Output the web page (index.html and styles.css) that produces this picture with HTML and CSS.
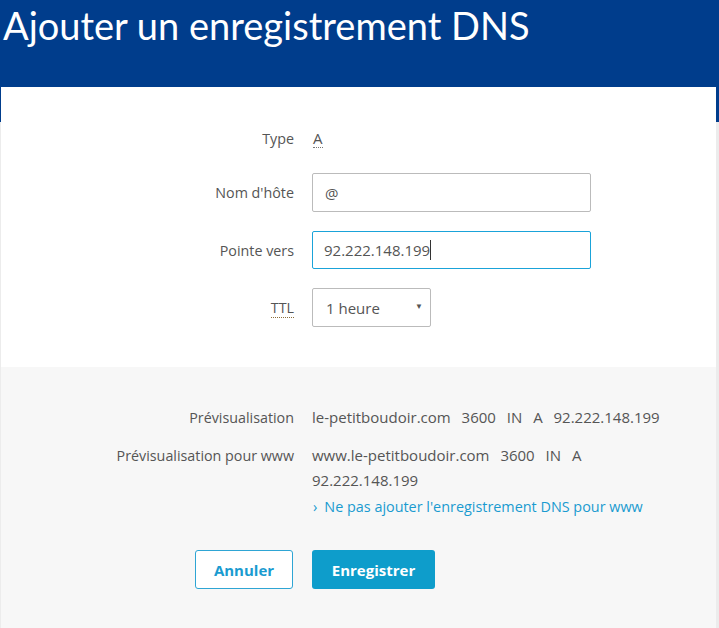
FILE: index.html
```html
<!DOCTYPE html>
<html lang="fr">
  <head>
    <meta charset="UTF-8" />
    <meta name="viewport" content="width=device-width, initial-scale=1.0" />
    <title>Ajouter un enregistrement DNS</title>
    <link rel="stylesheet" href="styles.css">
  </head>
  <body>
    <header class="page-header">
      <h1>Ajouter un enregistrement DNS</h1>
    </header>

    <div class="panel">
      <form class="record-form">
        <label class="field-label">Type</label>
        <div class="field-value type-row">
          <abbr class="type-value" title="Adresse IPv4">A</abbr>
        </div>

        <label class="field-label" for="hostname">Nom d'hôte</label>
        <div class="field-value">
          <input id="hostname" class="text-input" type="text" value="@" />
        </div>

        <label class="field-label">Pointe vers</label>
        <div class="field-value">
          <div class="text-input focused">92.222.148.199<span class="caret"></span></div>
        </div>

        <label class="field-label" for="ttl"><abbr class="ttl-label" title="Time To Live">TTL</abbr></label>
        <div class="field-value">
          <div class="select-wrap">
            <select id="ttl" class="select-input">
              <option>1 heure</option>
              <option>4 heures</option>
              <option>1 jour</option>
            </select>
          </div>
        </div>
      </form>

      <div class="preview">
        <div class="preview-grid">
          <span class="field-label">Prévisualisation</span>
          <div class="preview-value">le-petitboudoir.com 3600 IN A 92.222.148.199</div>

          <span class="field-label">Prévisualisation pour www</span>
          <div class="preview-value">
            <div>www.le-petitboudoir.com 3600 IN A 92.222.148.199</div>
            <a href="#" class="www-link"><span class="chevron">›</span>Ne pas ajouter l'enregistrement DNS pour www</a>
          </div>

          <span></span>
          <div class="actions">
            <button type="button" class="btn btn-outline">Annuler</button>
            <button type="button" class="btn btn-primary">Enregistrer</button>
          </div>
        </div>
      </div>
    </div>
  </body>
</html>
```

FILE: styles.css
```css
body {
  margin: 0;
  padding: 0;
  font-family: "Open Sans", "Noto Sans", sans-serif;
  background-color: #ececec;
  color: #555;
}

.page-header {
  background-color: #003d8c;
  height: 122px;
  padding: 0 3px;
  box-sizing: border-box;
}

.page-header h1 {
  margin: 0;
  padding-top: 1px;
  color: #fff;
  font-family: Lato, "Open Sans", sans-serif;
  font-size: 38px;
  font-weight: 400;
  line-height: 48px;
}

.panel {
  background-color: #fff;
  margin: -35px 3px 0 1px;
}

.record-form {
  display: grid;
  grid-template-columns: 293px 279px;
  column-gap: 18px;
  row-gap: 19px;
  align-items: center;
  padding: 35px 0 40px;
}

.field-label {
  text-align: right;
  font-size: 14.3px;
  color: #555;
}

.field-value {
  display: flex;
  align-items: center;
  min-height: 38px;
}

.field-value.type-row {
  min-height: 32px;
}

.type-value {
  text-decoration: none;
  font-size: 15px;
  border-bottom: 1px dotted #777;
  line-height: 18px;
  margin-left: 1px;
}

.ttl-label {
  text-decoration: none;
  border-bottom: 1px dotted #8a6d3b;
}

.text-input {
  box-sizing: border-box;
  width: 279px;
  height: 39px;
  padding: 0 12px;
  border: 1px solid #bbb;
  border-radius: 2px;
  font-family: inherit;
  font-size: 15px;
  color: #555;
  display: flex;
  align-items: center;
  outline: none;
}

.text-input.focused {
  border-color: #1aa3d9;
  height: 38px;
  padding-left: 11px;
}

.caret {
  display: inline-block;
  width: 1px;
  height: 20px;
  background-color: #333;
}

.select-wrap {
  position: relative;
  width: 119px;
}

.select-wrap::after {
  content: "▼";
  position: absolute;
  right: 8px;
  top: 12px;
  font-size: 8px;
  color: #555;
  pointer-events: none;
}

.select-input {
  appearance: none;
  -webkit-appearance: none;
  box-sizing: border-box;
  width: 119px;
  height: 39px;
  padding: 0 13px;
  border: 1px solid #bbb;
  border-radius: 2px;
  background-color: #fff;
  font-family: inherit;
  font-size: 15px;
  color: #555;
}

.preview {
  background-color: #f7f7f7;
  padding: 38px 0 40px;
}

.preview-grid {
  display: grid;
  grid-template-columns: 293px 360px;
  column-gap: 18px;
  row-gap: 13px;
  line-height: 25px;
}

.preview-value {
  font-size: 15px;
  word-spacing: 7px;
  color: #555;
}

.www-link {
  display: block;
  margin-top: 1px;
  font-size: 14.4px;
  word-spacing: 0;
  color: #1a9bd0;
  text-decoration: none;
}

.chevron {
  margin: 0 7px 0 1px;
}

.actions {
  display: flex;
  gap: 19px;
  margin-left: -117px;
  margin-top: 18px;
}

.btn {
  height: 39px;
  border-radius: 3px;
  font-family: inherit;
  font-size: 15px;
  font-weight: 700;
  cursor: pointer;
}

.btn-outline {
  width: 98px;
  background-color: #fff;
  border: 1px solid #2ea5d4;
  color: #1a9bd0;
}

.btn-primary {
  width: 123px;
  background-color: #0e9dcb;
  border: none;
  color: #fff;
}
```
